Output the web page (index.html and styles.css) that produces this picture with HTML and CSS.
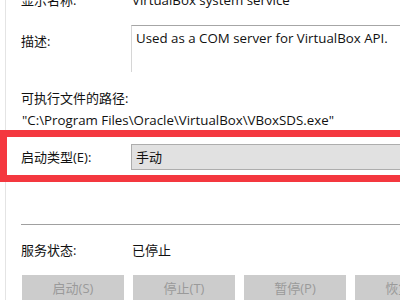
FILE: index.html
```html
<!DOCTYPE html>
<html>
<head>
<meta charset="utf-8">
<link rel="stylesheet" href="styles.css">
</head>
<body>
<div class="dialog">
  <div class="row row-name">
    <span class="label">显示名称:</span>
    <span class="value latin">VirtualBox system service</span>
  </div>
  <div class="row row-desc">
    <span class="label">描述:</span>
    <div class="desc latin">Used as a COM server for VirtualBox API.</div>
  </div>
  <div class="path-label">可执行文件的路径:</div>
  <div class="path latin">"C:\Program Files\Oracle\VirtualBox\VBoxSDS.exe"</div>
  <div class="row row-start">
    <span class="label">启动类型(E):</span>
    <div class="combo">手动</div>
  </div>
  <div class="sep"></div>
  <div class="row row-status">
    <span class="label">服务状态:</span>
    <span class="value">已停止</span>
  </div>
  <div class="buttons">
    <div class="btn">启动(S)</div>
    <div class="btn">停止(T)</div>
    <div class="btn">暂停(P)</div>
    <div class="btn">恢复(R)</div>
  </div>
</div>
<div class="highlight"></div>
</body>
</html>
```
FILE: styles.css
```css
html, body {
  margin: 0;
  padding: 0;
  background: #ffffff;
  overflow: hidden;
  width: 400px;
  height: 300px;
}
body {
  position: relative;
  font-family: "Open Sans", "Noto Sans CJK SC", sans-serif;
  font-size: 13px;
  color: #111;
}
.dialog {
  margin-left: 5px;
  border-left: 1px solid #e4e4e4;
  padding-left: 15px;
  height: 320px;
  width: 420px;
}
.latin {
  font-size: 13.3px;
}
.row {
  display: flex;
  align-items: flex-start;
}
.label {
  width: 110px;
  flex: none;
  line-height: 18px;
}
.value {
  line-height: 18px;
  margin-left: 1px;
}
.row-name {
  margin-top: -9px;
}
.row-desc {
  margin-top: 16px;
}
.row-desc .label {
  margin-top: 7px;
}
.desc {
  width: 300px;
  height: 47px;
  border-top: 1px solid #a6a6a6;
  border-left: 1px solid #d6d6d6;
  padding: 3px 4px;
  box-sizing: border-box;
  line-height: 18px;
}
.path-label {
  margin-top: 17px;
  line-height: 18px;
}
.path {
  margin-top: 4px;
  line-height: 18px;
  padding-left: 1px;
}
.row-start {
  margin-top: 15px;
}
.row-start .label {
  margin-top: 4px;
}
.combo {
  width: 300px;
  height: 26px;
  box-sizing: border-box;
  background: #e1e1e1;
  border: 1px solid #adadad;
  padding-left: 4px;
  line-height: 24px;
}
.sep {
  margin-top: 54px;
  height: 1px;
  background: #a0a0a0;
}
.row-status {
  margin-top: 16px;
}
.buttons {
  margin-top: 16px;
  display: flex;
  gap: 9px;
  padding-left: 1px;
}
.btn {
  flex: none;
  width: 102px;
  height: 26px;
  background: #cccccc;
  color: #9a9a9a;
  text-align: center;
  line-height: 26px;
}
.highlight {
  position: absolute;
  left: 0;
  top: 130px;
  width: 420px;
  height: 52px;
  box-sizing: border-box;
  border: 7px solid #f4383f;
}
```
